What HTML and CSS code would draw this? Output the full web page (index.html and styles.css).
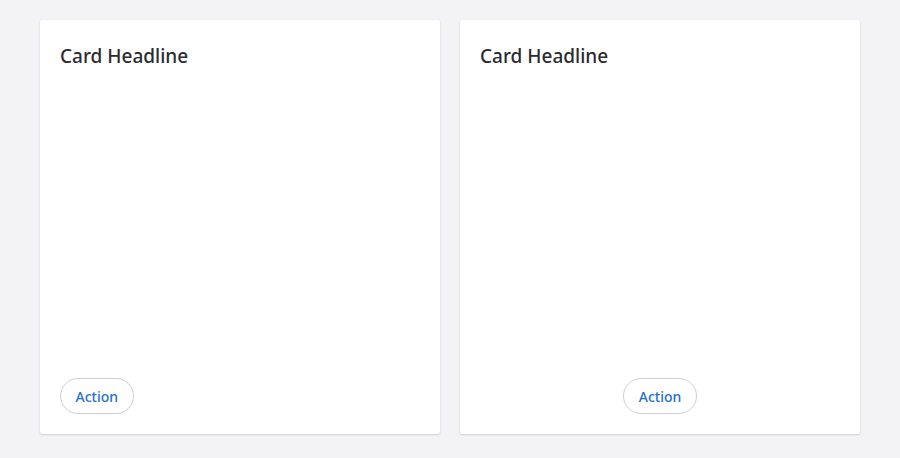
FILE: index.html
```html
<!DOCTYPE html>
<html>
<head>
<meta charset="utf-8">
<link rel="stylesheet" href="styles.css">
</head>
<body>
<div class="grid">
  <div class="card">
    <h2 class="headline">Card Headline</h2>
    <div class="body"></div>
    <div class="actions"><button class="btn">Action</button></div>
  </div>
  <div class="card">
    <h2 class="headline">Card Headline</h2>
    <div class="body"></div>
    <div class="actions center"><button class="btn">Action</button></div>
  </div>
</div>
</body>
</html>
```
FILE: styles.css
```css
html, body { margin: 0; padding: 0; }
body {
  background: #f3f3f5;
  font-family: "Noto Sans", "Open Sans", sans-serif;
  width: 900px;
  height: 458px;
}
.grid {
  display: flex;
  gap: 20px;
  padding: 20px 40px;
}
.card {
  width: 400px;
  height: 414px;
  box-sizing: border-box;
  background: #fff;
  border-radius: 2px;
  box-shadow: 0 1px 2px rgba(0,0,0,0.14), 0 0 1px rgba(0,0,0,0.08);
  padding: 20px;
  display: flex;
  flex-direction: column;
}
.headline {
  margin: 0;
  padding-top: 3px;
  font-size: 19px;
  font-weight: 500;
  color: #2b2b30;
  line-height: 26px;
}
.body { flex: 1; }
.actions { display: flex; }
.actions.center { justify-content: center; }
.btn {
  height: 36px;
  padding: 0 14.5px;
  border: 1px solid #cfcfd3;
  border-radius: 18px;
  background: #fff;
  color: #1f6fd0;
  font-family: inherit;
  font-size: 14px;
  font-weight: 500;
}
```
